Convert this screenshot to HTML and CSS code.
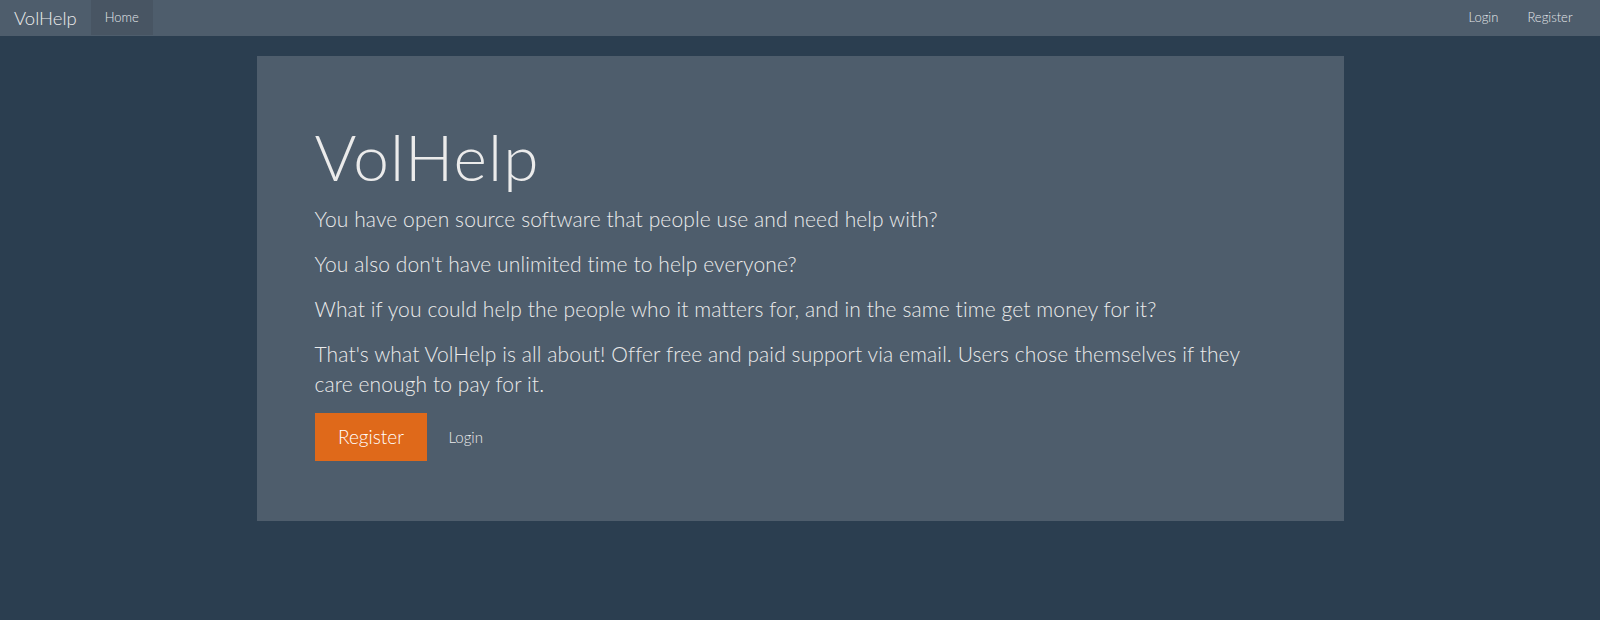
FILE: index.html
```html
<!DOCTYPE html>
<html>
<head>
  <title>VolHelp</title>
  <link rel="stylesheet" href="styles.css">
</head>
<body>
  <nav class="navbar">
    <div class="nav-left">
      <a class="brand" href="#">VolHelp</a>
      <ul class="nav">
        <li class="active"><a href="#">Home</a></li>
      </ul>
    </div>
    <ul class="nav nav-right">
      <li><a href="#">Login</a></li>
      <li><a href="#">Register</a></li>
    </ul>
  </nav>

  <div class="jumbotron">
    <h1>VolHelp</h1>
    <p>You have open source software that people use and need help with?</p>
    <p>You also don't have unlimited time to help everyone?</p>
    <p>What if you could help the people who it matters for, and in the same time get money for it?</p>
    <p>That's what VolHelp is all about! Offer free and paid support via email. Users chose themselves if they care enough to pay for it.</p>
    <div class="actions">
      <a class="btn btn-primary" href="#">Register</a>
      <a class="btn-link" href="#">Login</a>
    </div>
  </div>
</body>
</html>
```

FILE: styles.css
```css
body {
  margin: 0;
  background-color: #2b3e50;
  color: #ebebeb;
  font-family: Lato, "Open Sans", sans-serif;
  font-weight: 300;
  font-size: 15px;
}

a {
  color: #ebebeb;
  text-decoration: none;
}

.navbar {
  display: flex;
  justify-content: space-between;
  height: 36px;
  background-color: #4e5d6c;
  padding: 0 13px 0 0;
}

.nav-left {
  display: flex;
}

.brand {
  display: block;
  padding: 0 14px 0 14px;
  font-size: 18.5px;
  line-height: 36px;
  height: 36px;
}

.nav {
  display: flex;
  list-style: none;
  margin: 0;
  padding: 0;
}

.nav li a {
  display: block;
  padding: 0 14.5px;
  font-size: 13px;
  font-weight: 300;
  line-height: 35px;
  color: #e4e7ea;
}

.nav li.active a {
  padding: 0 14px;
  background-color: #485563;
}

.jumbotron {
  width: 954px;
  margin: 20px auto 0;
  padding: 48px 75px 48px 58px;
  background-color: #4e5d6c;
}

.jumbotron h1 {
  font-size: 64px;
  font-weight: 300;
  letter-spacing: 1.2px;
  line-height: 1.1;
  margin: 17.7px 0 11.5px;
}

.jumbotron p {
  font-size: 21px;
  letter-spacing: 0.1px;
  line-height: 30px;
  margin: 0 0 15px;
}

.actions {
  display: flex;
  align-items: center;
  margin: -1px 0 12.4px;
}

.btn {
  display: inline-block;
  box-sizing: border-box;
  height: 48px;
  padding: 0 23.5px;
  font-size: 19px;
  line-height: 48px;
}

.btn-primary {
  background-color: #df691a;
  color: #fff;
}

.btn-link {
  padding: 0 21px;
  font-size: 15px;
  font-weight: 300;
}
```
